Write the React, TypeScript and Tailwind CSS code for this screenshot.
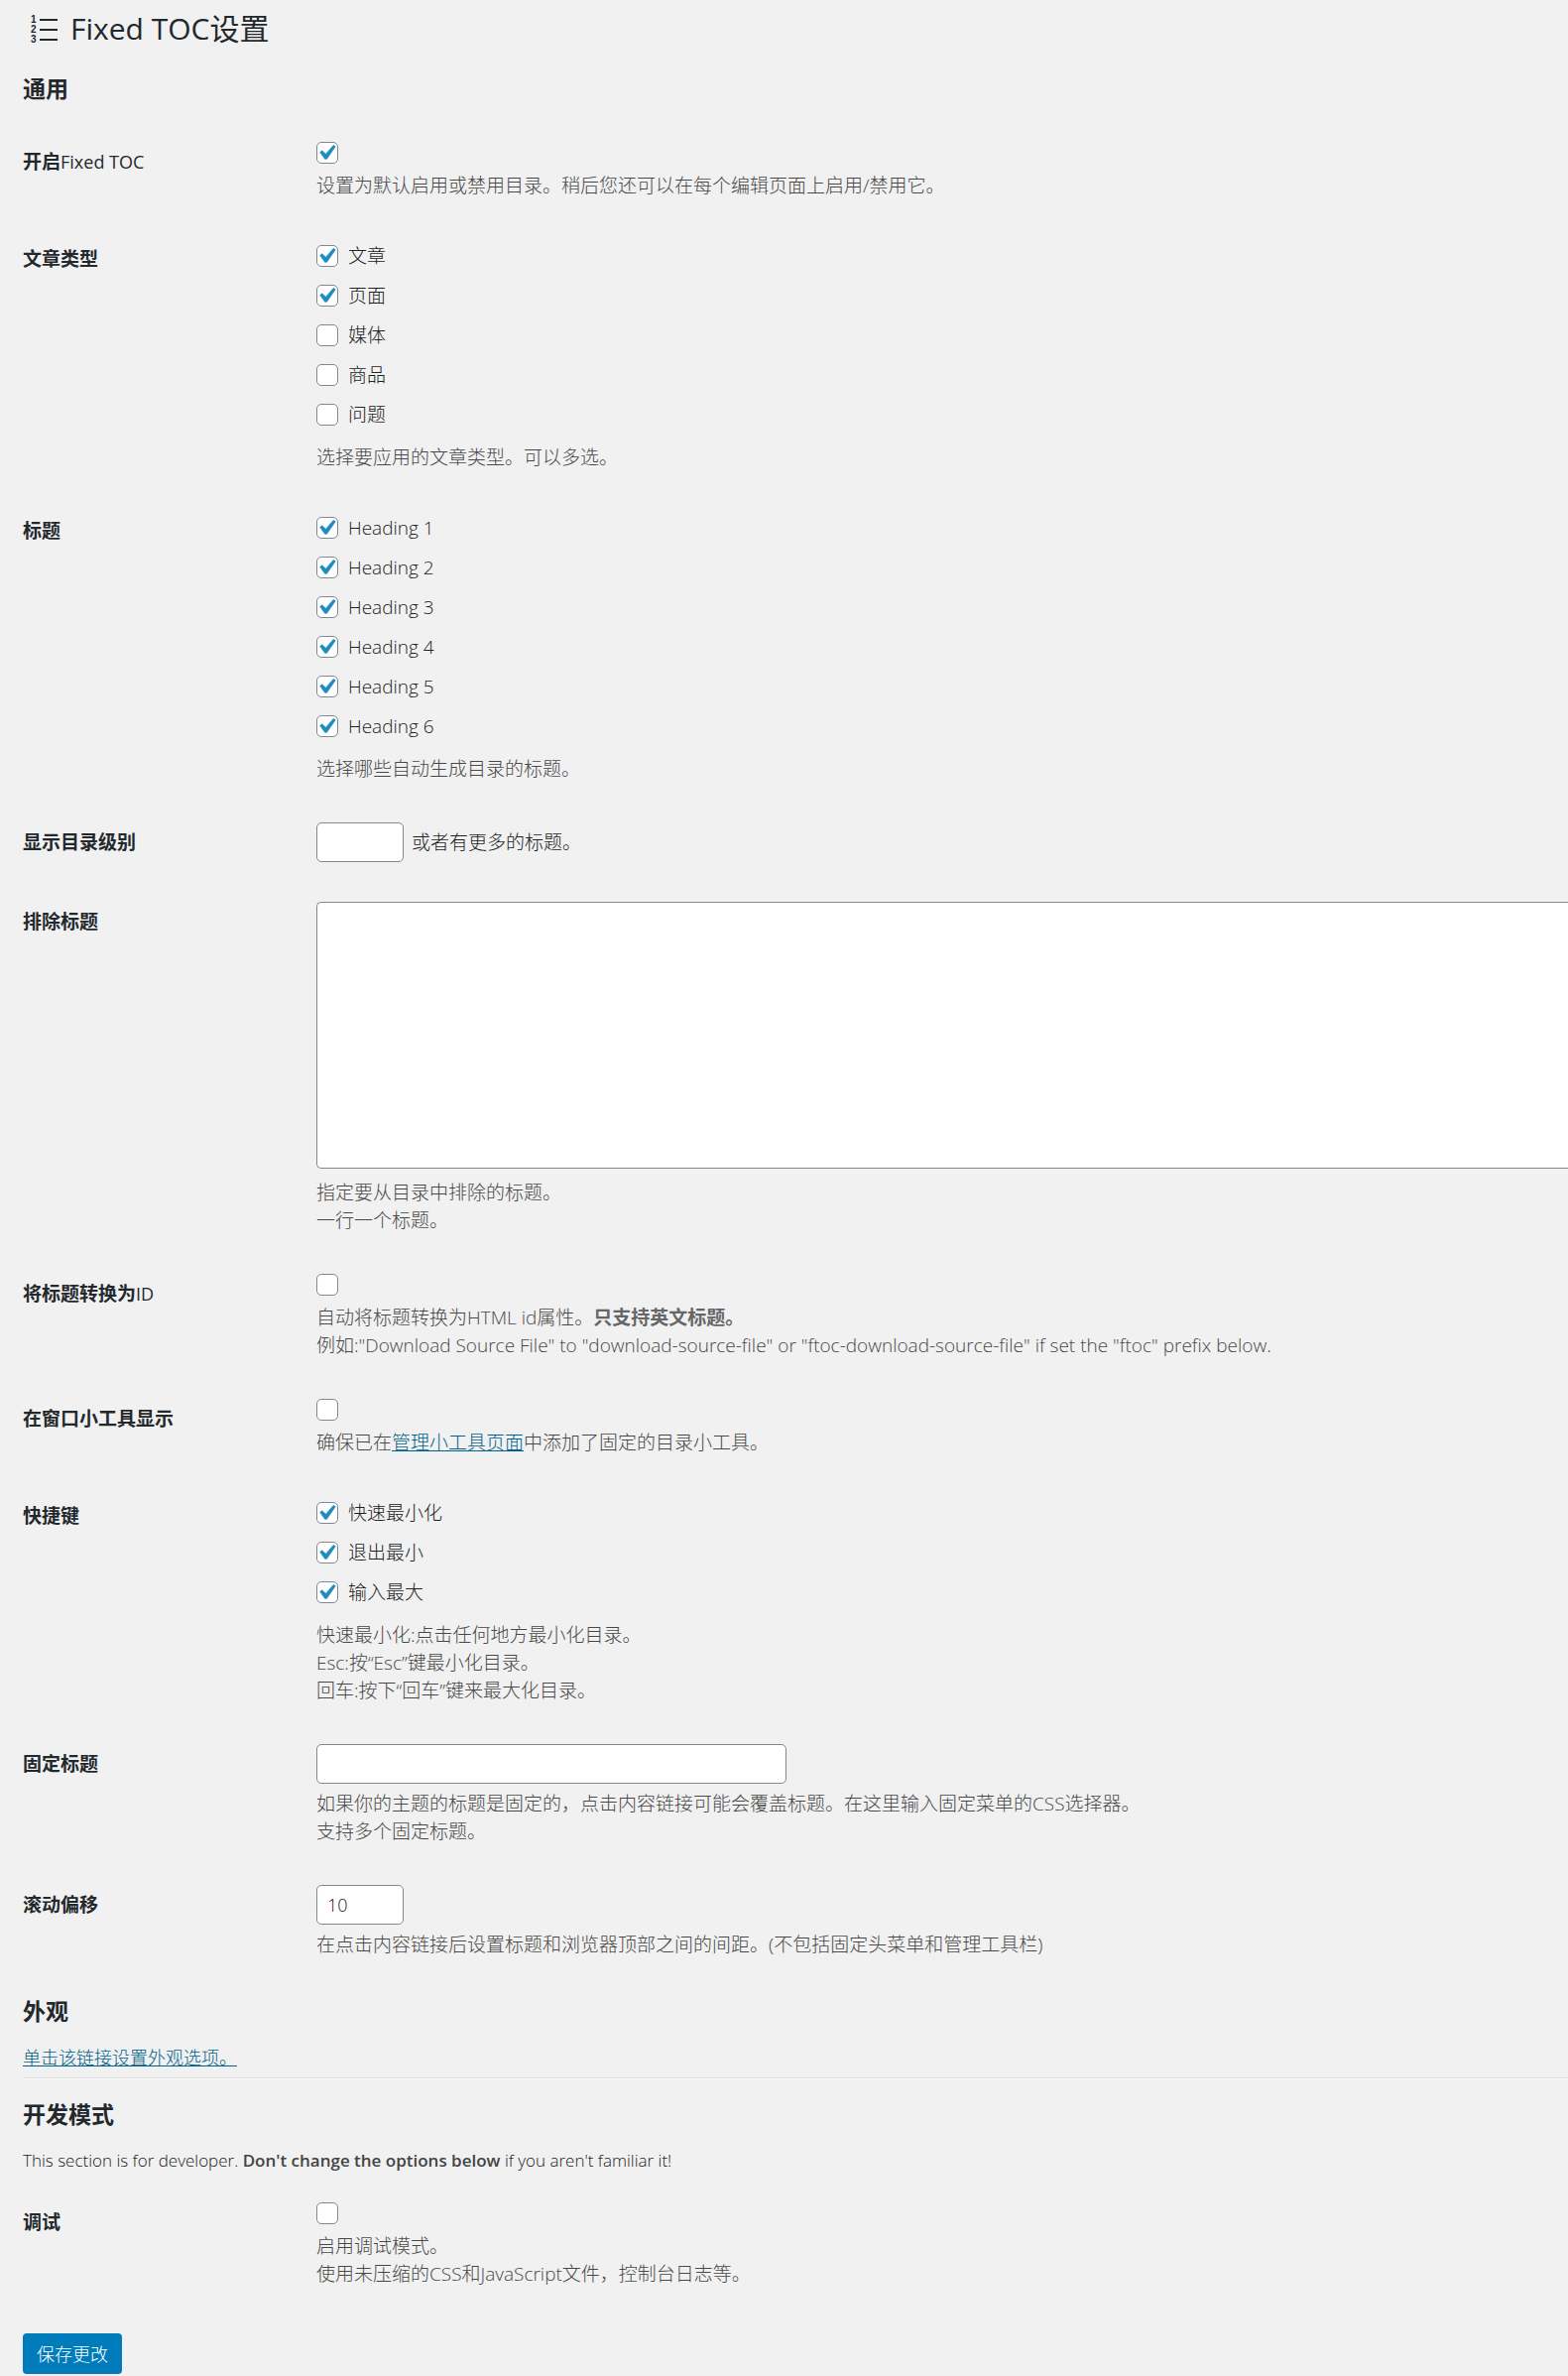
import React, { useState } from 'react';

interface CheckboxProps {
  id: string;
  defaultChecked?: boolean;
}

interface CheckOption {
  id: string;
  label: string;
  checked: boolean;
}

interface FieldRowProps {
  label: React.ReactNode;
  htmlFor?: string;
  children: React.ReactNode;
}

const postTypes: CheckOption[] = [
  { id: 'type-post', label: '文章', checked: true },
  { id: 'type-page', label: '页面', checked: true },
  { id: 'type-media', label: '媒体', checked: false },
  { id: 'type-product', label: '商品', checked: false },
  { id: 'type-question', label: '问题', checked: false },
];

const headings: CheckOption[] = [1, 2, 3, 4, 5, 6].map((level) => ({
  id: `heading-${level}`,
  label: `Heading ${level}`,
  checked: true,
}));

const shortcuts: CheckOption[] = [
  { id: 'key-quick', label: '快速最小化', checked: true },
  { id: 'key-esc', label: '退出最小', checked: true },
  { id: 'key-enter', label: '输入最大', checked: true },
];

const inputClass = 'h-10 rounded-[5px] border border-[#7e8993] bg-white px-[10px] text-[18px] text-[#222]';

const OrderedListIcon: React.FC = () => (
  <svg className="h-8 w-7 shrink-0 text-[#23282d]" viewBox="0 0 28 32" aria-hidden="true">
    <g fill="currentColor" className="font-['Liberation_Sans',sans-serif] text-[10px] font-bold">
      <text x="0" y="10">1</text>
      <text x="0" y="20">2</text>
      <text x="0" y="30">3</text>
    </g>
    <path d="M9 7h18M9 17h18M9 27h18" stroke="currentColor" strokeWidth="2" />
  </svg>
);

const Checkbox: React.FC<CheckboxProps> = ({ id, defaultChecked = false }) => {
  const [checked, setChecked] = useState<boolean>(defaultChecked);

  return (
    <span className="relative block h-[22px] w-[22px] shrink-0">
      <input
        id={id}
        type="checkbox"
        checked={checked}
        onChange={(e) => setChecked(e.target.checked)}
        className="block h-[22px] w-[22px] appearance-none rounded-[5px] border border-[#7e8993] bg-white"
      />
      {checked && (
        <svg className="pointer-events-none absolute -left-[5px] -top-[4px] h-[30px] w-[30px]" viewBox="0 0 20 20" aria-hidden="true">
          <path
            d="M14.83 4.89l1.34.94-5.81 8.38H9.02L5.78 9.67l1.34-1.25 2.57 2.4z"
            fill="#1e8cbe"
            stroke="#1e8cbe"
            strokeWidth="0.4"
          />
        </svg>
      )}
    </span>
  );
};

const CheckboxList: React.FC<{ options: CheckOption[] }> = ({ options }) => (
  <div className="-mt-[3px] mb-[9px]">
    {options.map((option) => (
      <div key={option.id} className="flex h-10 items-center gap-[10px]">
        <Checkbox id={option.id} defaultChecked={option.checked} />
        <label htmlFor={option.id} className="text-[19px] leading-7">{option.label}</label>
      </div>
    ))}
  </div>
);

const FieldRow: React.FC<FieldRowProps> = ({ label, htmlFor, children }) => {
  const labelClass = 'pt-[6px] text-[19px] font-semibold leading-7 text-[#23282d]';

  return (
    <div className="grid grid-cols-[296px_1fr] py-5">
      {htmlFor ? (
        <label htmlFor={htmlFor} className={labelClass}>{label}</label>
      ) : (
        <div className={labelClass}>{label}</div>
      )}
      <div>{children}</div>
    </div>
  );
};

const Description: React.FC<{ className?: string; children: React.ReactNode }> = ({ className = '', children }) => (
  <p className={`text-[19px] leading-7 text-[#484848] ${className}`}>{children}</p>
);

const App: React.FC = () => {
  return (
    <main className="bg-[#f1f1f1] pb-[2px] pl-[23px] font-['Open_Sans','Noto_Sans_CJK_SC',sans-serif] font-light text-[#222]">
      <h1 className="flex h-[58px] items-center gap-3 pl-2 text-[30px] font-normal leading-10 text-[#23282d]">
        <OrderedListIcon />
        <span>Fixed TOC设置</span>
      </h1>

      <h2 className="pb-[19px] pt-4 text-[23px] font-semibold leading-[30px] text-[#23282d]">通用</h2>

      <FieldRow label={<>开启<span className="text-[18px] font-medium">Fixed TOC</span></>} htmlFor="enable">
        <Checkbox id="enable" defaultChecked />
        <Description className="mt-2">设置为默认启用或禁用目录。稍后您还可以在每个编辑页面上启用/禁用它。</Description>
      </FieldRow>

      <FieldRow label="文章类型">
        <CheckboxList options={postTypes} />
        <Description>选择要应用的文章类型。可以多选。</Description>
      </FieldRow>

      <FieldRow label="标题">
        <CheckboxList options={headings} />
        <Description>选择哪些自动生成目录的标题。</Description>
      </FieldRow>

      <FieldRow label="显示目录级别" htmlFor="level">
        <div className="flex items-center gap-2">
          <input id="level" type="text" className={`${inputClass} w-[88px]`} />
          <span className="text-[19px] leading-7">或者有更多的标题。</span>
        </div>
      </FieldRow>

      <FieldRow label="排除标题" htmlFor="exclude">
        <textarea
          id="exclude"
          className="block h-[269px] w-full resize-none rounded-l-[5px] border border-r-0 border-[#7e8993] bg-white px-[10px] py-1 text-[19px]"
        />
        <Description className="mt-[10px]">
          指定要从目录中排除的标题。
          <br />
          一行一个标题。
        </Description>
      </FieldRow>

      <FieldRow label={<>将标题转换为<span className="text-[18px] font-medium">ID</span></>} htmlFor="to-id">
        <Checkbox id="to-id" />
        <Description className="mt-2">
          自动将标题转换为HTML id属性。<strong className="font-semibold text-[#666]">只支持英文标题。</strong>
          <br />
          例如:"Download Source File" to "download-source-file" or "ftoc-download-source-file" if set the "ftoc" prefix below.
        </Description>
      </FieldRow>

      <FieldRow label="在窗口小工具显示" htmlFor="widget">
        <Checkbox id="widget" />
        <Description className="mt-2">
          确保已在<a href="#widgets" className="text-[#00628c] underline">管理小工具页面</a>中添加了固定的目录小工具。
        </Description>
      </FieldRow>

      <FieldRow label="快捷键">
        <CheckboxList options={shortcuts} />
        <Description>
          快速最小化:点击任何地方最小化目录。
          <br />
          Esc:按“Esc”键最小化目录。
          <br />
          回车:按下“回车”键来最大化目录。
        </Description>
      </FieldRow>

      <FieldRow label="固定标题" htmlFor="fixed-header">
        <input id="fixed-header" type="text" className={`${inputClass} block w-[474px]`} />
        <Description className="mt-[6px]">
          如果你的主题的标题是固定的，点击内容链接可能会覆盖标题。在这里输入固定菜单的CSS选择器。
          <br />
          支持多个固定标题。
        </Description>
      </FieldRow>

      <FieldRow label="滚动偏移" htmlFor="offset">
        <input id="offset" type="text" defaultValue="10" className={`${inputClass} block w-[88px]`} />
        <Description className="mt-[6px]">在点击内容链接后设置标题和浏览器顶部之间的间距。(不包括固定头菜单和管理工具栏)</Description>
      </FieldRow>

      <h2 className="pb-[18px] pt-[18px] text-[23px] font-semibold leading-[30px] text-[#23282d]">外观</h2>
      <p className="text-[18px] leading-7">
        <a href="#customize" className="text-[#00628c] underline">单击该链接设置外观选项。</a>
      </p>
      <hr className="mt-[6px] h-[2px] border-b border-t border-b-[#fafafa] border-t-[#ddd]" />

      <h2 className="pb-[18px] pt-5 text-[23px] font-semibold leading-[30px] text-[#23282d]">开发模式</h2>
      <p className="pb-2 text-[17px] leading-7">
        This section is for developer. <strong className="font-semibold text-[#444]">Don't change the options below</strong> if you aren't familiar it!
      </p>

      <FieldRow label="调试" htmlFor="debug">
        <Checkbox id="debug" />
        <Description className="mt-2">
          启用调试模式。
          <br />
          使用未压缩的CSS和JavaScript文件，控制台日志等。
        </Description>
      </FieldRow>

      <button type="button" className="mt-[26px] block h-[41px] rounded-[4px] bg-[#007cba] px-[14px] text-[18px] leading-7 text-white">
        保存更改
      </button>
    </main>
  );
};

export default App;
